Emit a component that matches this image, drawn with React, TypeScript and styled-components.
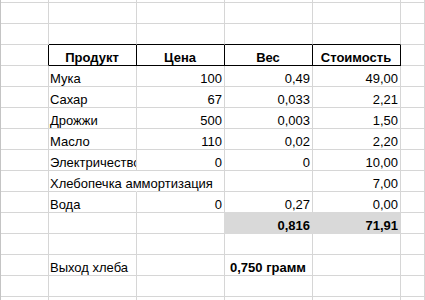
import styled, { createGlobalStyle } from "styled-components";

const GRID = "#d6d6d6";
const FILL = "#d9d9d9";

type Align = "left" | "right" | "center";

type CellSpec = {
  text?: string;
  align?: Align;
  bold?: boolean;
  fill?: boolean;
  spill?: boolean;
  right?: string;
  bottom?: string;
};

const GlobalStyle = createGlobalStyle`
  html, body {
    margin: 0;
    padding: 0;
    background: #ffffff;
    overflow: hidden;
  }
`;

const Sheet = styled.div`
  display: grid;
  grid-template-columns: 48px repeat(4, 88px) 1fr;
  grid-template-rows: 3px;
  grid-auto-rows: 21px;
  width: 425px;
  height: 300px;
  overflow: hidden;
  border-left: 1px solid #c4c4c4;
  box-sizing: border-box;
  font-family: "Liberation Sans", Arial, sans-serif;
  font-size: 13px;
  line-height: 15px;
  color: #000000;
`;

const Cell = styled.div<{
  $align: Align;
  $bold?: boolean;
  $fill?: boolean;
  $spill?: boolean;
  $right?: string;
  $bottom?: string;
}>`
  box-sizing: border-box;
  min-width: 0;
  display: flex;
  align-items: flex-end;
  justify-content: ${(p) =>
    p.$align === "right" ? "flex-end" : p.$align === "center" ? "center" : "flex-start"};
  padding: 0 2px 0 1px;
  white-space: nowrap;
  overflow: ${(p) => (p.$spill ? "visible" : "hidden")};
  font-weight: ${(p) => (p.$bold ? 700 : 400)};
  background: ${(p) => (p.$fill ? FILL : "transparent")};
  border-right: 1px solid ${(p) => p.$right ?? GRID};
  border-bottom: 1px solid ${(p) => p.$bottom ?? GRID};
  position: relative;
  z-index: ${(p) => (p.$spill ? 1 : 0)};
`;

const EMPTY: CellSpec[] = [{}, {}, {}, {}, {}, {}];

const item = (name: string, price: string, weight: string, cost: string): CellSpec[] => [
  {},
  { text: name },
  { text: price, align: "right" },
  { text: weight, align: "right" },
  { text: cost, align: "right" },
  {},
];

const rows: CellSpec[][] = [
  EMPTY,
  EMPTY,
  [{}, { bottom: "#000" }, { bottom: "#000" }, { bottom: "#000" }, { bottom: "#000" }, {}],
  [
    { right: "#000" },
    { text: "Продукт", align: "center", bold: true, right: "#000", bottom: "#000" },
    { text: "Цена", align: "center", bold: true, right: "#000", bottom: "#000" },
    { text: "Вес", align: "center", bold: true, right: "#000", bottom: "#000" },
    { text: "Стоимость", align: "center", bold: true, right: "#000", bottom: "#000" },
    {},
  ],
  item("Мука", "100", "0,49", "49,00"),
  item("Сахар", "67", "0,033", "2,21"),
  item("Дрожжи", "500", "0,003", "1,50"),
  item("Масло", "110", "0,02", "2,20"),
  item("Электричество", "0", "0", "10,00"),
  [
    {},
    { text: "Хлебопечка аммортизация", spill: true, right: "transparent" },
    {},
    {},
    { text: "7,00", align: "right" },
    {},
  ],
  [
    {},
    { text: "Вода" },
    { text: "0", align: "right" },
    { text: "0,27", align: "right", bottom: FILL },
    { text: "0,00", align: "right", bottom: FILL },
    {},
  ],
  [
    {},
    {},
    { right: FILL },
    { text: "0,816", align: "right", bold: true, fill: true, right: FILL, bottom: FILL },
    { text: "71,91", align: "right", bold: true, fill: true, bottom: FILL },
    {},
  ],
  EMPTY,
  [{}, { text: "Выход хлеба" }, {}, { text: "0,750 грамм", align: "center", bold: true }, {}, {}],
  EMPTY,
  EMPTY,
];

export default function App() {
  return (
    <>
      <GlobalStyle />
      <Sheet>
        {rows.map((row, r) =>
          row.map((c, i) => (
            <Cell
              key={`${r}-${i}`}
              $align={c.align ?? "left"}
              $bold={c.bold}
              $fill={c.fill}
              $spill={c.spill}
              $right={c.right}
              $bottom={c.bottom}
            >
              {c.text && <span>{c.text}</span>}
            </Cell>
          ))
        )}
      </Sheet>
    </>
  );
}
